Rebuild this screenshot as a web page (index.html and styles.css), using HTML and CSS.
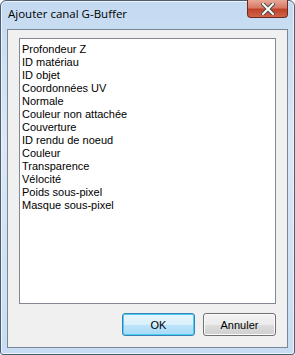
FILE: index.html
```html
<!DOCTYPE html>
<html>
  <head>
    <title>Ajouter canal G-Buffer</title>
    <link rel="stylesheet" href="styles.css">
  </head>
  <body>
    <div class="window">
      <div class="titlebar">
        <span class="title">Ajouter canal G-Buffer</span>
        <div class="close">
          <svg width="14" height="12" viewBox="0 0 14 12">
            <path d="M2 1 L12 11 M12 1 L2 11" stroke="#4a4a4a" stroke-width="4" stroke-linecap="square"/>
            <path d="M2 1 L12 11 M12 1 L2 11" stroke="#ffffff" stroke-width="2" stroke-linecap="square"/>
          </svg>
        </div>
      </div>
      <div class="client">
        <ul class="list">
          <li>Profondeur Z</li>
          <li>ID matériau</li>
          <li>ID objet</li>
          <li>Coordonnées UV</li>
          <li>Normale</li>
          <li>Couleur non attachée</li>
          <li>Couverture</li>
          <li>ID rendu de noeud</li>
          <li>Couleur</li>
          <li>Transparence</li>
          <li>Vélocité</li>
          <li>Poids sous-pixel</li>
          <li>Masque sous-pixel</li>
        </ul>
        <div class="buttons">
          <button class="btn default">OK</button>
          <button class="btn">Annuler</button>
        </div>
      </div>
    </div>
  </body>
</html>
```

FILE: styles.css
```css
body {
  margin: 0;
  background: #ffffff;
}
.window {
  width: 295px;
  height: 355px;
  box-sizing: border-box;
  border: 1px solid #4e5d70;
  border-radius: 6px 6px 3px 3px;
  background: linear-gradient(to bottom, #c4daf1 0%, #dbe8f6 40%, #c8ddf3 100%);
  box-shadow: inset 0 0 0 1px #eaf2fb;
  display: flex;
  flex-direction: column;
}
.titlebar {
  height: 28px;
  display: flex;
  justify-content: space-between;
  align-items: flex-start;
  padding-left: 7px;
}
.title {
  font-family: "Open Sans", sans-serif;
  font-size: 11.5px;
  color: #000000;
  margin-top: 5px;
}
.close {
  width: 41px;
  height: 18px;
  margin-top: -1px;
  margin-right: 6px;
  box-sizing: border-box;
  border: 1px solid #6e2a1e;
  border-top: none;
  border-radius: 0 0 4px 4px;
  background: linear-gradient(to bottom, #e8a898 0%, #d87a64 45%, #c0432a 55%, #d0654a 100%);
  display: flex;
  align-items: center;
  justify-content: center;
}
.client {
  flex: 1;
  margin: 0 6px 6px 6px;
  border: 1px solid #7a8797;
  background: #f0f0f0;
  display: flex;
  flex-direction: column;
  padding: 8px 11px 11px 11px;
}
.list {
  margin: 0;
  padding: 4px 2px;
  list-style: none;
  height: 266px;
  box-sizing: border-box;
  border: 1px solid #828790;
  background: #ffffff;
  font-family: "Liberation Sans", sans-serif;
  font-size: 11px;
  line-height: 13px;
  color: #000000;
}
.buttons {
  display: flex;
  justify-content: flex-end;
  gap: 8px;
  margin-top: 9px;
}
.btn {
  width: 73px;
  height: 23px;
  border: 1px solid #707070;
  border-radius: 3px;
  background: linear-gradient(to bottom, #f2f2f2 0%, #ebebeb 50%, #dddddd 51%, #cfcfcf 100%);
  font-family: "Liberation Sans", sans-serif;
  font-size: 11px;
  color: #000000;
  padding: 0;
  box-shadow: inset 0 0 0 1px #fcfcfc;
}
.btn.default {
  border-color: #3c7fb1;
  background: linear-gradient(to bottom, #eaf6fd 0%, #d9f0fc 50%, #bee6fd 51%, #a7d9f5 100%);
  box-shadow: inset 0 0 0 1px #48d0f8;
}
```
